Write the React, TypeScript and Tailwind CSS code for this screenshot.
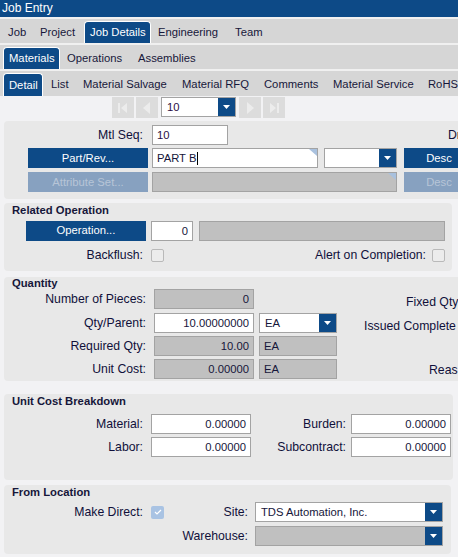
import React from "react";

type FieldProps = {
  w: number;
  gray?: boolean;
  right?: boolean;
  corner?: boolean;
  cursor?: boolean;
  children?: React.ReactNode;
  h?: number;
};

function Corner() {
  return (
    <svg className="absolute top-0 right-0" width="8" height="7" viewBox="0 0 8 7">
      <polygon points="0,0 8,0 8,7" fill="#a9c1de" />
    </svg>
  );
}

function Field({ w, gray, right, corner, cursor, children }: FieldProps) {
  return (
    <div
      style={{ width: w }}
      className={`relative h-[20px] shrink-0 border border-[#a3a3a3] px-[4px] leading-[18px] whitespace-nowrap overflow-hidden ${
        gray ? "bg-[#c0c0c0]" : "bg-white"
      } ${right ? "text-right" : "text-left"}`}
    >
      {children}
      {cursor && <span className="inline-block w-[1px] h-[13px] bg-black align-middle ml-[1px] -mt-[2px]" />}
      {corner && <Corner />}
    </div>
  );
}

function Arrow() {
  return (
    <svg width="7" height="4" viewBox="0 0 7 4">
      <path d="M0 0H7L3.5 4Z" fill="white" />
    </svg>
  );
}

function Combo({ w, gray, children }: { w: number; gray?: boolean; children?: React.ReactNode }) {
  return (
    <div
      style={{ width: w }}
      className={`h-[20px] shrink-0 border border-[#a3a3a3] flex ${gray ? "bg-[#c0c0c0]" : "bg-white"}`}
    >
      <div className="flex-1 pl-[5px] leading-[18px] whitespace-nowrap overflow-hidden">{children}</div>
      <div className="w-[17px] h-full bg-[#0d4a87] flex items-center justify-center">
        <Arrow />
      </div>
    </div>
  );
}

function Btn({ w, disabled, children }: { w: number; disabled?: boolean; children: React.ReactNode }) {
  return (
    <div
      style={{ width: w }}
      className={`h-[20px] shrink-0 flex items-center justify-center whitespace-nowrap overflow-hidden ${
        disabled ? "bg-[#87a1c0] text-[#b7c5d7]" : "bg-[#0d4a87] text-white"
      }`}
    >
      {children}
    </div>
  );
}

function Check({ checked }: { checked?: boolean }) {
  if (checked) {
    return (
      <div className="w-[13px] h-[13px] shrink-0 rounded-[2px] bg-[#a9c3e3] flex items-center justify-center">
        <svg width="8" height="6" viewBox="0 0 8 6">
          <path d="M1 3L3 5L7 1" stroke="white" strokeWidth="1.2" fill="none" />
        </svg>
      </div>
    );
  }
  return <div className="w-[13px] h-[13px] shrink-0 rounded-[2px] border border-[#b9b9b9] bg-[#ececec]" />;
}

function Label({ w, children }: { w: number; children: React.ReactNode }) {
  return (
    <div style={{ width: w }} className="shrink-0 text-right whitespace-nowrap text-[12.25px] text-[#10103a]">
      {children}
    </div>
  );
}

type TabDef = { label: string; w: number; sel?: boolean; ml?: number };

function TabRow({ tabs, h }: { tabs: TabDef[]; h: number }) {
  return (
    <div style={{ height: h }} className="bg-[#d6d6d6] flex items-stretch overflow-hidden">
      {tabs.map((t) => (
        <div
          key={t.label}
          style={{ width: t.w, marginLeft: t.ml ?? 0 }}
          className={`shrink-0 mt-[2px] flex items-center whitespace-nowrap ${
            t.sel
              ? "bg-[#0d4a87] text-white border border-white border-b-0 rounded-t-[4px] pl-[5px]"
              : "pl-[6px] text-[#16163a]"
          }`}
        >
          {t.label}
        </div>
      ))}
    </div>
  );
}

function NavBtn({ kind, ml }: { kind: "first" | "prev" | "next" | "last"; ml: number }) {
  const c = "#ececec";
  return (
    <div style={{ marginLeft: ml }} className="w-[22px] h-[21px] bg-[#dcdcdc] flex items-center justify-center shrink-0">
      <svg width="12" height="12" viewBox="0 0 12 12">
        {kind === "first" && (
          <>
            <rect x="1" y="1" width="2" height="10" fill={c} />
            <path d="M10 1V11L4 6Z" fill={c} />
          </>
        )}
        {kind === "prev" && <path d="M9 0V12L2 6Z" fill={c} />}
        {kind === "next" && <path d="M3 0V12L10 6Z" fill={c} />}
        {kind === "last" && (
          <>
            <path d="M2 1V11L8 6Z" fill={c} />
            <rect x="9" y="1" width="2" height="10" fill={c} />
          </>
        )}
      </svg>
    </div>
  );
}

export default function App() {
  return (
    <div className="w-[458px] h-[557px] overflow-hidden bg-[#f2f2f4] font-['Liberation_Sans',Arial,sans-serif] text-[11.25px] text-[#16163a]">
      <div className="h-[17px] bg-[#0d4a87] text-white pl-[2px] leading-[17px] text-[12px]">Job Entry</div>
      <div className="h-[2px] bg-[#f0f0f0]" />
      <TabRow
        h={24}
        tabs={[
          { label: "Job", w: 32, ml: 2 },
          { label: "Project", w: 50 },
          { label: "Job Details", w: 67, sel: true },
          { label: "Engineering", w: 77, ml: 1 },
          { label: "Team", w: 60 },
        ]}
      />
      <div className="h-[2px] bg-[#f0f0f0]" />
      <TabRow
        h={24}
        tabs={[
          { label: "Materials", w: 57, sel: true, ml: 3 },
          { label: "Operations", w: 71, ml: 1 },
          { label: "Assemblies", w: 80 },
        ]}
      />
      <div className="h-[2px] bg-[#f0f0f0]" />
      <TabRow
        h={25}
        tabs={[
          { label: "Detail", w: 40, sel: true, ml: 3 },
          { label: "List", w: 32, ml: 2 },
          { label: "Material Salvage", w: 99 },
          { label: "Material RFQ", w: 82 },
          { label: "Comments", w: 69 },
          { label: "Material Service", w: 95 },
          { label: "RoHS", w: 50 },
        ]}
      />

      {/* navigation */}
      <div className="h-[21px] mt-[1px] flex">
        <NavBtn kind="first" ml={112} />
        <NavBtn kind="prev" ml={2} />
        <div className="ml-[3px] flex">
          <Combo w={75}>
            <span className="text-[#2b0f45]">10</span>
          </Combo>
        </div>
        <NavBtn kind="next" ml={3} />
        <NavBtn kind="last" ml={2} />
      </div>

      {/* Panel 1 */}
      <div className="mt-[3px] ml-[4px] w-[480px] h-[78px] rounded-[4px] bg-[#e8e8e8] pt-[4px]">
        <div className="flex items-center h-[20px]">
          <Label w={139}>Mtl Seq:</Label>
          <div className="ml-[9px]">
            <Field w={76}>
              <span className="text-[#2b0f45]">10</span>
            </Field>
          </div>
          <div className="ml-[220px] whitespace-nowrap text-[12.25px] text-[#10103a]">Dr</div>
        </div>
        <div className="flex items-center mt-[3px]">
          <div className="ml-[24px]">
            <Btn w={120}>Part/Rev...</Btn>
          </div>
          <div className="ml-[4px]">
            <Field w={166} corner cursor>
              PART B
            </Field>
          </div>
          <div className="ml-[6px]">
            <Combo w={73} />
          </div>
          <div className="ml-[7px]">
            <Btn w={70}>Desc</Btn>
          </div>
        </div>
        <div className="flex items-center mt-[4px]">
          <div className="ml-[24px]">
            <Btn w={120} disabled>
              Attribute Set...
            </Btn>
          </div>
          <div className="ml-[4px]">
            <Field w={245} gray corner />
          </div>
          <div className="ml-[7px]">
            <Btn w={70} disabled>
              Desc
            </Btn>
          </div>
        </div>
      </div>

      {/* Related Operation */}
      <div className="mt-[4px] ml-[4px] w-[448px] h-[68px] rounded-[4px] bg-[#e8e8e8]">
        <div className="h-[15px] leading-[15px] pl-[8px] font-bold">Related Operation</div>
        <div className="flex items-center mt-[2px] h-[21px]">
          <div className="ml-[22px]">
            <Btn w={120}>Operation...</Btn>
          </div>
          <div className="ml-[5px]">
            <Field w={42} right>
              0
            </Field>
          </div>
          <div className="ml-[6px]">
            <Field w={246} gray />
          </div>
        </div>
        <div className="flex items-center mt-[8px] h-[13px]">
          <Label w={139}>Backflush:</Label>
          <div className="ml-[8px]">
            <Check />
          </div>
          <Label w={262}>Alert on Completion:</Label>
          <div className="ml-[6px]">
            <Check />
          </div>
        </div>
      </div>

      {/* Quantity */}
      <div className="mt-[6px] ml-[4px] w-[480px] h-[104px] rounded-[4px] bg-[#e8e8e8]">
        <div className="h-[12px] leading-[12px] pl-[8px] font-bold">Quantity</div>
        <div className="flex">
          <div className="w-[333px] shrink-0">
            <div className="flex items-center">
              <Label w={142}>Number of Pieces:</Label>
              <div className="ml-[8px]">
                <Field w={100} gray right>
                  0
                </Field>
              </div>
            </div>
            <div className="flex items-center mt-[4px]">
              <Label w={142}>Qty/Parent:</Label>
              <div className="ml-[8px]">
                <Field w={100} right>
                  10.00000000
                </Field>
              </div>
              <div className="ml-[5px]">
                <Combo w={78}>EA</Combo>
              </div>
            </div>
            <div className="flex items-center mt-[3px]">
              <Label w={142}>Required Qty:</Label>
              <div className="ml-[8px]">
                <Field w={100} gray right>
                  10.00
                </Field>
              </div>
              <div className="ml-[5px]">
                <Field w={78} gray>
                  EA
                </Field>
              </div>
            </div>
            <div className="flex items-center mt-[3px]">
              <Label w={142}>Unit Cost:</Label>
              <div className="ml-[8px]">
                <Field w={100} gray right>
                  0.00000
                </Field>
              </div>
              <div className="ml-[5px]">
                <Field w={78} gray>
                  EA
                </Field>
              </div>
            </div>
          </div>
          <div className="flex flex-col leading-[14px] whitespace-nowrap text-[12.25px] text-[#10103a]">
            <div className="mt-[6px] ml-[69px]">Fixed Qty</div>
            <div className="mt-[10px] ml-[27px]">Issued Complete</div>
            <div className="mt-[30px] ml-[92px]">Reas</div>
          </div>
        </div>
      </div>

      {/* Unit Cost Breakdown */}
      <div className="mt-[13px] ml-[4px] w-[449px] h-[86px] rounded-[4px] bg-[#e8e8e8]">
        <div className="h-[14px] leading-[14px] pl-[8px] font-bold">Unit Cost Breakdown</div>
        <div className="flex items-center mt-[6px]">
          <Label w={139}>Material:</Label>
          <div className="ml-[8px]">
            <Field w={100} right>
              0.00000
            </Field>
          </div>
          <Label w={95}>Burden:</Label>
          <div className="ml-[5px]">
            <Field w={100} right>
              0.00000
            </Field>
          </div>
        </div>
        <div className="flex items-center mt-[3px]">
          <Label w={139}>Labor:</Label>
          <div className="ml-[8px]">
            <Field w={100} right>
              0.00000
            </Field>
          </div>
          <Label w={95}>Subcontract:</Label>
          <div className="ml-[5px]">
            <Field w={100} right>
              0.00000
            </Field>
          </div>
        </div>
      </div>

      {/* From Location */}
      <div className="mt-[5px] ml-[4px] w-[447px] h-[69px] rounded-[4px] bg-[#e8e8e8]">
        <div className="h-[14px] leading-[14px] pl-[8px] font-bold">From Location</div>
        <div className="flex items-center mt-[3px] h-[20px]">
          <Label w={139}>Make Direct:</Label>
          <div className="ml-[8px]">
            <Check checked />
          </div>
          <Label w={84}>Site:</Label>
          <div className="ml-[7px]">
            <Combo w={188}>TDS Automation, Inc.</Combo>
          </div>
        </div>
        <div className="flex items-center mt-[4px] h-[20px]">
          <Label w={244}>Warehouse:</Label>
          <div className="ml-[7px]">
            <Combo w={188} gray />
          </div>
        </div>
      </div>
    </div>
  );
}
